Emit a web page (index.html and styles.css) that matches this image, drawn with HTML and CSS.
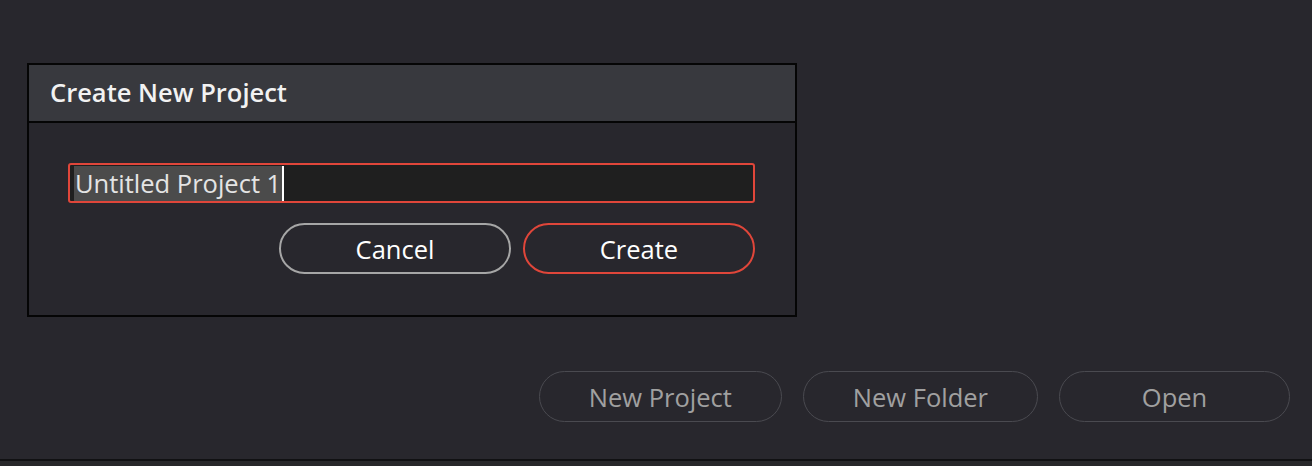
FILE: index.html
```html
<!DOCTYPE html>
<html>
<head>
<meta charset="utf-8">
<link rel="stylesheet" href="styles.css">
</head>
<body>
<div class="page">
  <div class="dialog">
    <div class="dialog-header">Create New Project</div>
    <div class="dialog-body">
      <div class="name-input"><span class="selected">Untitled Project 1</span><span class="caret"></span></div>
      <div class="dialog-actions">
        <button class="btn btn-cancel">Cancel</button>
        <button class="btn btn-create">Create</button>
      </div>
    </div>
  </div>
  <div class="toolbar">
    <button class="btn-tool">New Project</button>
    <button class="btn-tool">New Folder</button>
    <button class="btn-tool">Open</button>
  </div>
</div>
<div class="footer"></div>
</body>
</html>
```

FILE: styles.css
```css
html, body {
  margin: 0;
  padding: 0;
  background: #28272d;
  font-family: "Open Sans", "Noto Sans", sans-serif;
  width: 1312px;
  height: 466px;
  overflow: hidden;
}
.page {
  height: 459px;
  display: flex;
  flex-direction: column;
  padding-top: 63px;
  box-sizing: border-box;
}
.dialog {
  margin-left: 27px;
  width: 770px;
  height: 254px;
  box-sizing: border-box;
  border: 2px solid #050505;
  background: #28272d;
}
.dialog-header {
  height: 58px;
  box-sizing: border-box;
  background: #38393e;
  border-bottom: 2px solid #050505;
  color: #f2f2f2;
  font-weight: 600;
  font-size: 25.5px;
  padding-left: 21px;
  display: flex;
  align-items: center;
  padding-bottom: 2px;
}
.dialog-body {
  padding: 40px 40px 0 39px;
}
.name-input {
  height: 40px;
  box-sizing: border-box;
  border: 2px solid #e0463a;
  border-radius: 3px;
  background: #1f1f1f;
  display: flex;
  align-items: center;
  padding-left: 4px;
}
.selected {
  background: #4b4b4b;
  color: #e4e4e4;
  font-size: 25.5px;
  line-height: 35px;
  padding-left: 1px;
  padding-right: 1px;
}
.caret {
  width: 2px;
  height: 35px;
  background: #ffffff;
}
.dialog-actions {
  display: flex;
  justify-content: flex-end;
  gap: 12px;
  margin-top: 20px;
}
.btn {
  width: 232px;
  height: 51px;
  border-radius: 26px;
  background: transparent;
  font-family: inherit;
  font-size: 25.5px;
  color: #ffffff;
  padding: 0;
  cursor: pointer;
}
.btn-cancel {
  border: 2px solid #a6a6a6;
}
.btn-create {
  border: 2px solid #e0463a;
}
.toolbar {
  display: flex;
  justify-content: flex-end;
  gap: 21px;
  margin-top: 54px;
  padding-right: 22px;
}
.btn-tool {
  height: 51px;
  min-width: 231px;
  padding: 0 49px;
  border: 1.5px solid #4a4a50;
  border-radius: 26px;
  background: transparent;
  color: #a0a0a0;
  font-family: inherit;
  font-size: 25.5px;
}
.footer {
  height: 7px;
  border-top: 2px solid #111113;
  background: #28282a;
}
```
